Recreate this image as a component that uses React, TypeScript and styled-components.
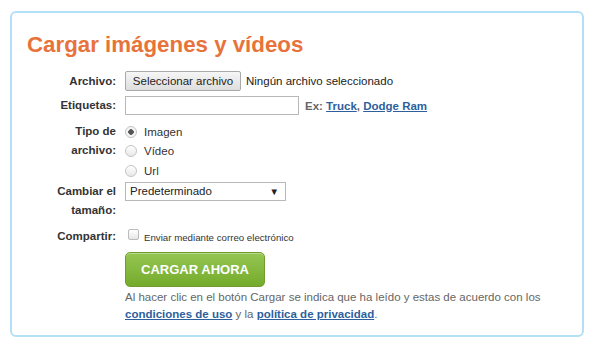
import React, { useState } from "react";
import styled, { createGlobalStyle } from "styled-components";

const GlobalStyle = createGlobalStyle`
  html, body { margin: 0; padding: 0; background: #fff; }
  body { font-family: "Liberation Sans", Arial, sans-serif; color: #333; }
`;

const Page = styled.div`
  padding: 11px 16px 10px 10px;
`;

const Panel = styled.section`
  width: 555px;
  height: 322px;
  border: 2px solid #b3e0f7;
  border-radius: 6px;
  padding: 0 0 0 15px;
  box-sizing: content-box;
`;

const Title = styled.h1`
  margin: 0;
  padding-top: 18px;
  font-size: 22.3px;
  line-height: 28px;
  font-weight: bold;
  color: #e8733a;
`;

const Form = styled.form`
  display: grid;
  grid-template-columns: 89px 1fr;
  column-gap: 9px;
  margin-top: 12px;
`;

const Label = styled.label<{ $top?: number }>`
  font-size: 11.5px;
  font-weight: bold;
  line-height: 19px;
  text-align: right;
  color: #333;
  padding-top: ${(p) => p.$top ?? 0}px;
`;

const Field = styled.div<{ $gap?: number }>`
  display: flex;
  align-items: center;
  gap: 5px;
  font-size: 11.5px;
  color: #222;
  margin-bottom: ${(p) => p.$gap ?? 0}px;
`;

const FileButton = styled.button`
  height: 20px;
  width: 116px;
  padding: 0;
  font: 11.5px "Liberation Sans", Arial, sans-serif;
  color: #222;
  background: linear-gradient(#f6f6f6, #dedede);
  border: 1px solid #a9a9a9;
  border-radius: 2px;
`;

const TextInput = styled.input`
  width: 174px;
  height: 19px;
  box-sizing: border-box;
  border: 1px solid #b8b8b8;
  padding: 0 3px;
  font: 11.5px "Liberation Sans", Arial, sans-serif;
`;

const Hint = styled.span`
  font-weight: bold;
  color: #666;
  margin-left: 1px;
  a {
    color: #2e5f9c;
  }
`;

const Options = styled.div`
  display: flex;
  flex-direction: column;
  margin: 7px 0 1px;
`;

const Option = styled.label`
  display: flex;
  align-items: center;
  height: 19.5px;
  font-size: 11.5px;
  color: #333;
  gap: 7px;
`;

const Radio = styled.span<{ $on?: boolean }>`
  width: 10px;
  height: 10px;
  border-radius: 50%;
  border: 1px solid #c4c4c4;
  background: ${(p) =>
    p.$on
      ? "radial-gradient(circle, #555 0 2.5px, #f4f4f4 3px)"
      : "linear-gradient(#ffffff, #e8e8e8)"};
`;

const SelectBox = styled.div`
  position: relative;
  width: 161px;
  height: 19px;
  box-sizing: border-box;
  border: 1px solid #b8b8b8;
  font-size: 11.5px;
  line-height: 17px;
  padding-left: 4px;
  color: #222;
  background: #fff;
`;

const Arrow = styled.span`
  position: absolute;
  right: 6px;
  top: 0;
  font-size: 9.5px;
  color: #222;
`;

const Check = styled.span`
  width: 9px;
  height: 9px;
  margin-left: 3px;
  border: 1px solid #bbb;
  border-radius: 2px;
  background: linear-gradient(#fff, #e6e6e6);
`;

const SmallText = styled.span`
  font-size: 9.7px;
  color: #333;
  margin-top: 3px;
`;

const Submit = styled.button`
  margin-top: 6px;
  width: 140px;
  height: 35px;
  border: 1px solid #6f9c2c;
  border-radius: 5px;
  background: linear-gradient(#95c653, #74ab2b);
  box-shadow: inset 0 1px 0 rgba(255, 255, 255, 0.35);
  color: #fff;
  font: bold 13px "Liberation Sans", Arial, sans-serif;
`;

const Legal = styled.p`
  margin: 2px 0 0;
  font-size: 11.5px;
  line-height: 17px;
  color: #666;
  a {
    color: #2e5f9c;
    font-weight: bold;
  }
`;

const Empty = styled.div``;

export default function App() {
  const [tipo, setTipo] = useState("Imagen");
  return (
    <>
      <GlobalStyle />
      <Page>
        <Panel>
          <Title>Cargar imágenes y vídeos</Title>
          <Form onSubmit={(e) => e.preventDefault()}>
            <Label $top={1}>Archivo:</Label>
            <Field $gap={5}>
              <FileButton type="button">Seleccionar archivo</FileButton>
              <span>Ningún archivo seleccionado</span>
            </Field>

            <Label>Etiquetas:</Label>
            <Field>
              <TextInput />
              <Hint>
                Ex: <a href="#">Truck</a>, <a href="#">Dodge Ram</a>
              </Hint>
            </Field>

            <Label $top={7}>
              Tipo de
              <br />
              archivo:
            </Label>
            <Options>
              {["Imagen", "Vídeo", "Url"].map((t) => (
                <Option key={t} onClick={() => setTipo(t)}>
                  <Radio $on={tipo === t} />
                  {t}
                </Option>
              ))}
            </Options>

            <Label>
              Cambiar el
              <br />
              tamaño:
            </Label>
            <Field style={{ alignItems: "flex-start" }}>
              <SelectBox>
                Predeterminado
                <Arrow>▼</Arrow>
              </SelectBox>
            </Field>

            <Label $top={7}>Compartir:</Label>
            <Field style={{ alignItems: "flex-start", paddingTop: 9 }}>
              <Check />
              <SmallText>Enviar mediante correo electrónico</SmallText>
            </Field>

            <Empty />
            <div>
              <Submit type="submit">CARGAR AHORA</Submit>
              <Legal>
                Al hacer clic en el botón Cargar se indica que ha leído y estas de acuerdo con los
                <br />
                <a href="#">condiciones de uso</a> y la <a href="#">política de privacidad</a>.
              </Legal>
            </div>
          </Form>
        </Panel>
      </Page>
    </>
  );
}
